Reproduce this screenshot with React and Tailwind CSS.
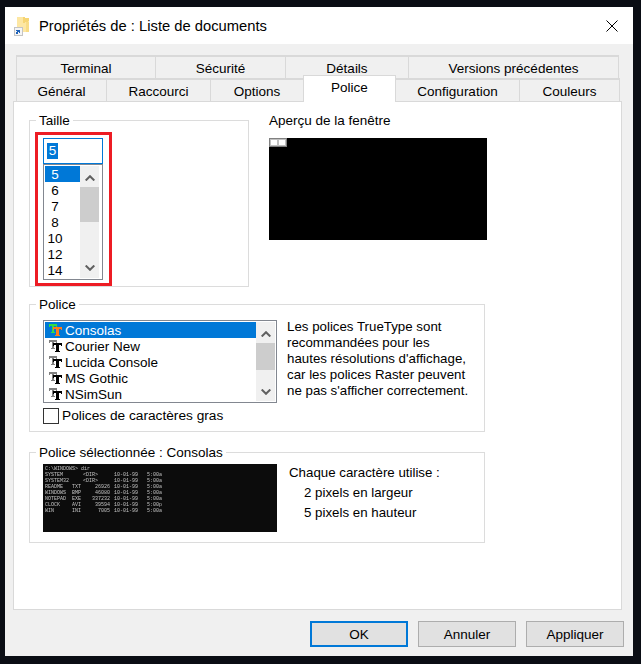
const F = '"Liberation Sans", Arial, sans-serif';

function Tab({ w, label }) {
  return (
    <div
      style={{ width: w }}
      className="h-full flex items-center justify-center pt-[3px] border-t-2 border-l border-r border-[#d9d9d9] bg-[#f0f0f0] text-[13.5px] text-black -mr-px"
    >
      {label}
    </div>
  );
}

function Chevron({ up }) {
  return (
    <svg width="10" height="6" viewBox="0 0 10 6" fill="none" stroke="#606060" strokeWidth="2">
      <path d={up ? "M0.7 5.5 L5 1.2 L9.3 5.5" : "M0.7 0.5 L5 4.8 L9.3 0.5"} />
    </svg>
  );
}

function Scrollbar({ thumbH, bottom }) {
  return (
    <div className="w-[19px] h-full bg-[#f0f0f0] flex flex-col shrink-0">
      <div className="h-[17px] flex items-center justify-center shrink-0 mt-[3px]"><Chevron up /></div>
      <div style={{ height: thumbH }} className="w-full mt-px bg-[#cdcdcd] shrink-0" />
      <div className="flex-1" />
      <div style={{ marginBottom: bottom }} className="h-[17px] flex items-center justify-center shrink-0"><Chevron /></div>
    </div>
  );
}

function TT({ color }) {
  const a = color ? "#33dd44" : "#808080";
  const b = color ? "#ff7a1a" : "#000000";
  return (
    <svg width="13" height="12" viewBox="0 0 13 12" className="shrink-0" shapeRendering="crispEdges">
      <path d="M0 0h8v3h-1v-1h-2v6h1v1h-4v-1h1v-6h-2v1h-1z" fill={a} />
      <path d="M4 3h9v3h-1v-1h-2v6h1v1h-5v-1h1v-6h-2v1h-1z" fill={b} />
    </svg>
  );
}

function FolderIcon() {
  return (
    <svg width="16" height="19" viewBox="0 0 16 19" className="mt-[2px] shrink-0" shapeRendering="crispEdges">
      <path d="M3 0h7l1 1h4v14H3z" fill="#fde7a3" />
      <path d="M9 0h1l1 1h4v3l-6 2z" fill="#f6d574" />
      <path d="M12 5h3v10h-3z" fill="#f8dc86" />
      <rect x="0.5" y="10.5" width="8" height="8" fill="#f5f5f5" stroke="#c4c4c4" strokeWidth="1" />
      <path d="M2 17v-2h1v-1h-1v-1h4v3h-1v-1h-1v2z" fill="#1f62b8" />
    </svg>
  );
}

function Group({ label, className, children }) {
  return (
    <fieldset className={"border border-[#dcdcdc] px-[13px] " + className}>
      <legend className="-ml-[7px] px-[3px] pt-[2px] text-[13.5px] leading-[14px] text-black">{label}</legend>
      {children}
    </fieldset>
  );
}

const sizes = ["5", "6", "7", "8", "10", "12", "14"];
const fonts = ["Consolas", "Courier New", "Lucida Console", "MS Gothic", "NSimSun"];
const rows = [
  ["C:\\WINDOWS> dir", "", "", "", ""],
  ["SYSTEM", "<DIR>", "", "10-01-99", "5:00a"],
  ["SYSTEM32", "<DIR>", "", "10-01-99", "5:00a"],
  ["README   TXT", "", "26926", "10-01-99", "5:00a"],
  ["WINDOWS  BMP", "", "46080", "10-01-99", "5:00a"],
  ["NOTEPAD  EXE", "", "337232", "10-01-99", "5:00a"],
  ["CLOCK    AVI", "", "39594", "10-01-99", "5:00p"],
  ["WIN      INI", "", "7005", "10-01-99", "5:00a"],
];

export default function App() {
  return (
    <div style={{ fontFamily: F }} className="w-[641px] h-[664px] bg-[#0a0d14] pt-[7px] pl-[5px] overflow-hidden">
      <div className="w-[628px] h-[649px] bg-[#f0f0f0] flex flex-col">
        {/* title bar */}
        <div className="h-[37px] bg-white flex items-center shrink-0 pl-[9px] pr-[15px]">
          <FolderIcon />
          <span className="ml-[9px] mt-[2px] text-[14.75px] text-black">Propriétés de : Liste de documents</span>
          <svg className="ml-auto" width="12" height="12" viewBox="0 0 12 12" stroke="#000" strokeWidth="1" fill="none">
            <path d="M0.5 0.5 L11.5 11.5 M11.5 0.5 L0.5 11.5" />
          </svg>
        </div>

        {/* tabs */}
        <div className="pl-[11px] mt-[11px] h-[23px] flex shrink-0">
          <Tab w={140} label="Terminal" />
          <Tab w={131} label="Sécurité" />
          <Tab w={124} label="Détails" />
          <Tab w={211} label="Versions précédentes" />
        </div>
        <div className="pl-[11px] h-[23px] flex shrink-0">
          <Tab w={91} label="Général" />
          <Tab w={105} label="Raccourci" />
          <Tab w={94} label="Options" />
          <div className="w-[93px] h-[27px] -mt-[3px] -mr-px bg-white border-t border-l border-r border-[#d9d9d9] relative z-10 flex items-start justify-center pt-[2px] text-[13.5px]">Police</div>
          <Tab w={125} label="Configuration" />
          <Tab w={101} label="Couleurs" />
        </div>

        {/* panel */}
        <div className="ml-[8px] w-[609px] h-[509px] bg-white border border-[#d9d9d9] shrink-0 pl-[15px] pt-[10px]">
          <div className="flex">
            <Group label="Taille" className="w-[220px] h-[175px] shrink-0">
              <div className="-ml-[8px] mt-[4px] w-[77px] h-[154px] border-[3px] border-[#ed1c24] pl-[5px] pt-[3px]">
                <div className="w-[60px] h-[26px] border border-[#0078d7] bg-white flex items-center pl-[3px]">
                  <span className="w-[11px] bg-[#0078d7] text-white text-[13.5px] leading-[16px] text-center">5</span>
                </div>
                <div className="w-[60px] h-[116px] border border-[#828790] bg-white flex p-px">
                  <div className="w-[35px] shrink-0">
                    {sizes.map((s, i) => (
                      <div key={s} className={"h-[16px] pt-px leading-[15px] text-[13.5px] " + (i === 0 ? "bg-[#0078d7] text-white" : "text-black")}>
                        <span className="block w-[20px] text-center">{s}</span>
                      </div>
                    ))}
                  </div>
                  <Scrollbar thumbH={35} bottom={2} />
                </div>
              </div>
            </Group>
            <div className="ml-[20px]">
              <div className="pt-px text-[13.5px] leading-[16px]">Aperçu de la fenêtre</div>
              <div className="mt-[9px] w-[218px] h-[102px] bg-black">
                <div className="w-[18px] h-[9px] bg-[#c0c0c0] border border-[#808080] flex gap-[2px] p-px">
                  <div className="w-[6px] h-[5px] bg-white" />
                  <div className="w-[6px] h-[5px] bg-white" />
                </div>
              </div>
            </div>
          </div>

          <Group label="Police" className="w-[456px] h-[136px] mt-[9px]">
            <div className="flex mt-[8px]">
              <div className="w-[234px] h-[83px] border border-[#828790] bg-white flex p-px shrink-0">
                <div className="flex-1">
                  {fonts.map((f, i) => (
                    <div key={f} className={"h-[16px] flex items-center text-[13.5px] pl-[4px] " + (i === 0 ? "bg-[#0078d7] text-white" : "text-black")}>
                      <TT color={i === 0} />
                      <span className="ml-[3px] pt-px leading-[15px]">{f}</span>
                    </div>
                  ))}
                </div>
                <Scrollbar thumbH={27} bottom={1} />
              </div>
              <p className="ml-[10px] -mt-px w-[184px] text-[13.3px] leading-[16px] text-black">Les polices TrueType sont recommandées pour les hautes résolutions d'affichage, car les polices Raster peuvent ne pas s'afficher correctement.</p>
            </div>
            <div className="flex items-center mt-[5px]">
              <div className="w-[16px] h-[16px] border border-[#333] bg-white" />
              <span className="ml-[3px] text-[13.7px] leading-[16px]">Polices de caractères gras</span>
            </div>
          </Group>

          <Group label="Police sélectionnée : Consolas" className="w-[456px] h-[99px] mt-[12px]">
            <div className="flex mt-[4px]">
              <div className="w-[234px] h-[68px] bg-[#0c0c0c] shrink-0 overflow-hidden pl-[2px] pt-[2px] font-['Liberation_Mono'] blur-[0.3px]">
                {rows.map((r, i) => (
                  <div key={i} className="flex h-[6px] text-[5px] leading-[6px] text-[#c4c4c4] whitespace-pre">
                    <span className="w-[38px] shrink-0">{r[0]}</span>
                    <span className="w-[27px] shrink-0 flex justify-between">
                      <span>{r[1]}</span>
                      <span>{r[2]}</span>
                    </span>
                    <span className="w-[33px] ml-[4px] shrink-0">{r[3]}</span>
                    <span>{r[4]}</span>
                  </div>
                ))}
              </div>
              <div className="ml-[12px] -mt-px text-[13.3px] leading-[20px]">
                <div>Chaque caractère utilise :</div>
                <div className="pl-[15px]">2 pixels en largeur</div>
                <div className="pl-[15px]">5 pixels en hauteur</div>
              </div>
            </div>
          </Group>
        </div>

        {/* buttons */}
        <div className="flex ml-[305px] mt-[11px] gap-[10px]">
          <button className="w-[98px] h-[26px] pt-[2px] bg-[#e1e1e1] border-2 border-[#0078d7] text-[13.5px]">OK</button>
          <button className="w-[98px] h-[26px] pt-[2px] bg-[#e1e1e1] border border-[#adadad] text-[13.5px]">Annuler</button>
          <button className="w-[98px] h-[26px] pt-[2px] bg-[#e1e1e1] border border-[#adadad] text-[13.5px]">Appliquer</button>
        </div>
      </div>
    </div>
  );
}
